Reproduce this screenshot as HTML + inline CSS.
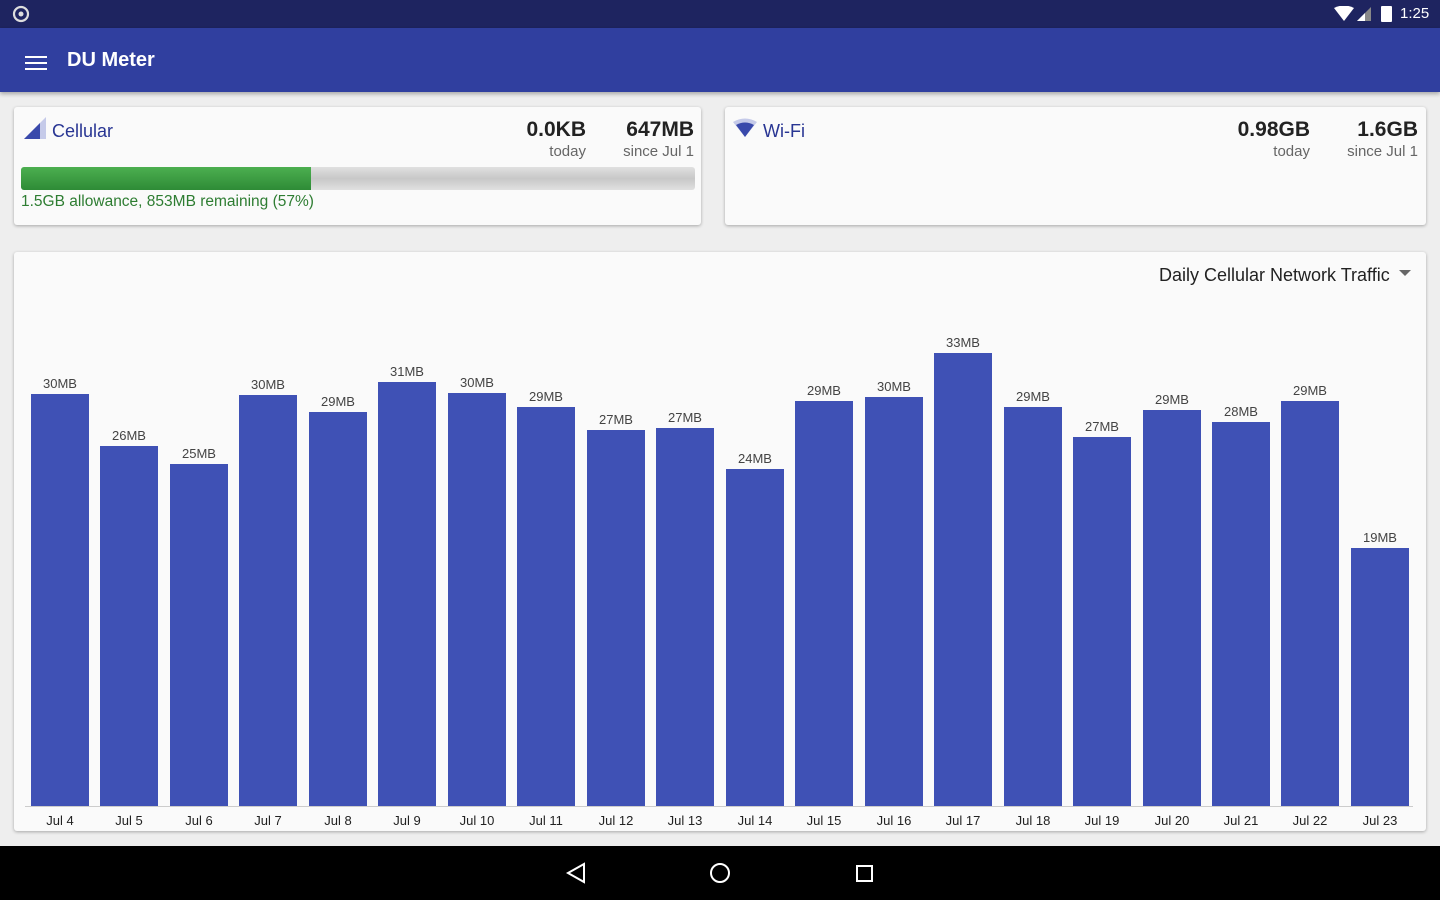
<!DOCTYPE html>
<html><head><meta charset="utf-8"><style>
*{margin:0;padding:0;box-sizing:border-box}
body{width:1440px;height:900px;background:#eeeeee;font-family:"Liberation Sans",Roboto,sans-serif;position:relative;overflow:hidden}
.abs{position:absolute}
.sb{left:0;top:0;width:1440px;height:28px;background:#1e2460}
.ab{left:0;top:28px;width:1440px;height:64px;background:#303f9f;box-shadow:0 2px 4px rgba(0,0,0,.3)}
.card{background:#fafafa;border-radius:3px;box-shadow:0 1px 3px rgba(0,0,0,.3)}
.nav{left:0;top:846px;width:1440px;height:54px;background:#000}
.bar{position:absolute;background:#3f51b5;width:58px;bottom:94px}
.lbl{position:absolute;font-size:13px;color:#444;width:70px;text-align:center}
.xl{position:absolute;font-size:13px;color:#222;width:70px;text-align:center;top:813px}
.big{font-size:21px;font-weight:bold;color:#222;text-align:right}
.sm{font-size:15px;color:#666;text-align:right}
</style></head><body>
<div class="abs sb"></div>
<svg class="abs" style="left:11px;top:5px" width="20" height="18" viewBox="0 0 20 18"><circle cx="10" cy="9" r="7" fill="none" stroke="#ddd" stroke-width="2.2"/><circle cx="10" cy="9" r="2.5" fill="#ddd"/></svg>
<svg class="abs" style="left:1334px;top:6px" width="40" height="16"><path d="M0 2 Q10 -3 20 2 L10 15Z" fill="#fff"/><path d="M23 15 L37 1 L37 15Z" fill="#888"/><path d="M23 15 L31 7 L31 15Z" fill="#fff"/></svg>
<div class="abs" style="left:1381px;top:6px;width:11px;height:16px;background:#fff;border-radius:1px"></div>
<div class="abs" style="left:1400px;top:5px;color:#fff;font-size:15px">1:25</div>
<div class="abs ab"></div>
<div class="abs" style="left:25px;top:56px;width:22px;height:2px;background:#fff;box-shadow:0 6px 0 #fff,0 12px 0 #fff"></div>
<div class="abs" style="left:67px;top:49px;color:#fff;font-size:20px;font-weight:bold">DU Meter</div>

<div class="abs card" style="left:14px;top:107px;width:687px;height:118px"></div>
<svg class="abs" style="left:24px;top:117px" width="22" height="22"><path d="M0 22L22 0V22Z" fill="#c5cae9"/><path d="M0 22L16 6V22Z" fill="#3949ab"/></svg>
<div class="abs" style="left:52px;top:121px;font-size:18px;color:#283593">Cellular</div>
<div class="abs big" style="left:486px;top:118px;width:100px">0.0KB</div>
<div class="abs sm" style="left:486px;top:143px;width:100px">today</div>
<div class="abs big" style="left:594px;top:118px;width:100px">647MB</div>
<div class="abs sm" style="left:594px;top:143px;width:100px">since Jul 1</div>
<div class="abs" style="left:21px;top:167px;width:674px;height:23px;border-radius:3px;background:linear-gradient(#e0e0e0,#c8c8c8 50%,#e0e0e0)"></div>
<div class="abs" style="left:21px;top:167px;width:290px;height:23px;border-radius:3px 0 0 3px;background:linear-gradient(#4caf50,#2e8b36)"></div>
<div class="abs" style="left:21px;top:193px;font-size:15.5px;color:#2e7d32">1.5GB allowance, 853MB remaining (57%)</div>

<div class="abs card" style="left:725px;top:107px;width:701px;height:118px"></div>
<svg class="abs" style="left:733px;top:118px" width="26" height="20"><path d="M0 4 Q12 -3 24 4 L12 19Z" fill="#c5cae9"/><path d="M3 7 Q12 2 21 7 L12 19Z" fill="#3949ab"/></svg>
<div class="abs" style="left:763px;top:121px;font-size:18px;color:#283593">Wi-Fi</div>
<div class="abs big" style="left:1190px;top:118px;width:120px">0.98GB</div>
<div class="abs sm" style="left:1190px;top:143px;width:120px">today</div>
<div class="abs big" style="left:1298px;top:118px;width:120px">1.6GB</div>
<div class="abs sm" style="left:1298px;top:143px;width:120px">since Jul 1</div>

<div class="abs card" style="left:14px;top:252px;width:1412px;height:579px"></div>
<div class="abs" style="left:1159px;top:265px;font-size:18px;color:#222">Daily Cellular Network Traffic</div>
<svg class="abs" style="left:1399px;top:270px" width="12" height="8"><path d="M0 0H12L6 6Z" fill="#666"/></svg>
<div class="abs" style="left:25px;top:806px;width:1388px;height:1px;background:#ccc"></div>
<div id="ch"></div>
<script>
var t=[394,446,464,395,412,382,393,407,430,428,469,401,397,353,407,437,410,422,401,548];
var v=[30,26,25,30,29,31,30,29,27,27,24,29,30,33,29,27,29,28,29,19];
var h='';
for(var i=0;i<20;i++){var x=Math.round(31+i*69.47);
h+='<div class="bar" style="left:'+x+'px;top:'+t[i]+'px;height:'+(806-t[i])+'px"></div>';
h+='<div class="lbl" style="left:'+(x-6)+'px;top:'+(t[i]-18)+'px">'+v[i]+'MB</div>';
h+='<div class="xl" style="left:'+(x-6)+'px">Jul '+(i+4)+'</div>';}
document.getElementById('ch').innerHTML=h;
</script>
<div class="abs nav"></div>
<svg class="abs" style="left:560px;top:860px" width="320" height="28"><path d="M24 4L8 13L24 22Z" fill="none" stroke="#fff" stroke-width="2"/><circle cx="160" cy="13" r="9" fill="none" stroke="#fff" stroke-width="2"/><rect x="297" y="6" width="15" height="15" fill="none" stroke="#fff" stroke-width="2"/></svg>
</body></html>
